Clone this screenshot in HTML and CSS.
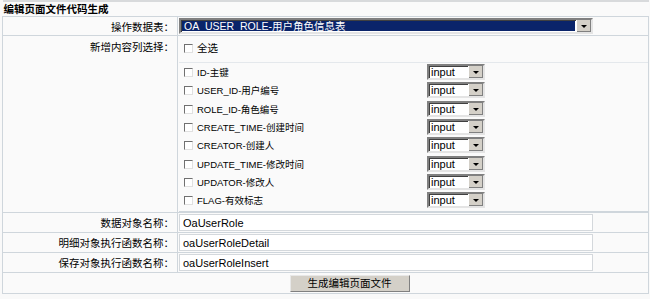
FILE: index.html
```html
<!DOCTYPE html>
<html lang="zh-CN">
<head>
    <meta charset="UTF-8">
    <title>编辑页面文件代码生成</title>
    <link rel="stylesheet" href="styles.css">
</head>
<body>
    <table class="form">
        <tr class="row-title">
            <td class="title" colspan="2">编辑页面文件代码生成</td>
        </tr>
        <tr class="row-main">
            <td class="label">操作数据表：</td>
            <td class="field">
                <div class="select big">
                    <span class="value picked">OA_USER_ROLE-用户角色信息表</span>
                    <span class="arrow"></span>
                </div>
            </td>
        </tr>
        <tr class="row-cols">
            <td class="label top">新增内容列选择：</td>
            <td class="field cols">
                <div class="all"><span class="check"></span>全选</div>
                <div class="list">
                    <div class="item">
                        <span class="name"><span class="check"></span>ID-主键</span>
                        <div class="select small"><span class="value">input</span><span class="arrow"></span></div>
                    </div>
                    <div class="item">
                        <span class="name"><span class="check"></span>USER_ID-用户编号</span>
                        <div class="select small"><span class="value">input</span><span class="arrow"></span></div>
                    </div>
                    <div class="item">
                        <span class="name"><span class="check"></span>ROLE_ID-角色编号</span>
                        <div class="select small"><span class="value">input</span><span class="arrow"></span></div>
                    </div>
                    <div class="item">
                        <span class="name"><span class="check"></span>CREATE_TIME-创建时间</span>
                        <div class="select small"><span class="value">input</span><span class="arrow"></span></div>
                    </div>
                    <div class="item">
                        <span class="name"><span class="check"></span>CREATOR-创建人</span>
                        <div class="select small"><span class="value">input</span><span class="arrow"></span></div>
                    </div>
                    <div class="item">
                        <span class="name"><span class="check"></span>UPDATE_TIME-修改时间</span>
                        <div class="select small"><span class="value">input</span><span class="arrow"></span></div>
                    </div>
                    <div class="item">
                        <span class="name"><span class="check"></span>UPDATOR-修改人</span>
                        <div class="select small"><span class="value">input</span><span class="arrow"></span></div>
                    </div>
                    <div class="item">
                        <span class="name"><span class="check"></span>FLAG-有效标志</span>
                        <div class="select small"><span class="value">input</span><span class="arrow"></span></div>
                    </div>
                </div>
            </td>
        </tr>
        <tr class="row-input">
            <td class="label">数据对象名称：</td>
            <td class="field"><div class="text">OaUserRole</div></td>
        </tr>
        <tr class="row-input">
            <td class="label">明细对象执行函数名称：</td>
            <td class="field"><div class="text">oaUserRoleDetail</div></td>
        </tr>
        <tr class="row-input">
            <td class="label">保存对象执行函数名称：</td>
            <td class="field"><div class="text">oaUserRoleInsert</div></td>
        </tr>
        <tr class="row-button">
            <td class="actions" colspan="2"><span class="button">生成编辑页面文件</span></td>
        </tr>
    </table>
</body>
</html>
```

FILE: styles.css
```css
body {
    margin: 0;
    background-color: #f9f9f9;
    font-family: "Liberation Sans", "Noto Sans CJK SC", sans-serif;
    font-size: 10.5px;
    color: #000;
}
.form {
    width: 647px;
    margin-left: 2px;
    border-collapse: collapse;
    border-top: 2px solid #d8dadc;
}
.form td {
    padding: 0;
    border: 1px solid #cfd6dc;
    background-color: #fafafa;
}
.row-title td {
    height: 14px;
    border-left: none;
    border-right: none;
}
.title {
    font-weight: bold;
    padding-left: 1px !important;
    line-height: 14px;
}
.row-main td {
    height: 18px;
}
.row-input td {
    height: 19px;
}
.row-button td {
    height: 20px;
}
.label {
    width: 171px;
    text-align: right;
    padding-right: 3px !important;
    white-space: nowrap;
    background-color: #f8f8f8;
}
.label.top {
    vertical-align: top;
    padding-top: 3px !important;
}
.field {
    padding-left: 1px !important;
}

/* 下拉框 */
.select {
    display: flex;
    box-sizing: border-box;
    height: 16px;
    border: 2px solid;
    border-color: #808080 #e4e4e4 #e4e4e4 #808080;
    background-color: #fff;
    box-shadow: inset 1px 1px 0 #404040;
}
.select .value {
    flex: 1;
    padding-left: 2px;
    line-height: 12px;
    overflow: hidden;
    white-space: nowrap;
}
.select .picked {
    background-color: #0a246a;
    color: #fff;
    margin: 1px;
    line-height: 10px;
    padding-top: 0;
}
.select .arrow {
    position: relative;
    width: 14px;
    background-color: #d4d0c8;
    border-left: 1px solid #fff;
    box-shadow: inset -1px -1px 0 #808080;
}
.select .arrow::after {
    content: "";
    position: absolute;
    left: 4px;
    top: 5px;
    border-left: 3px solid transparent;
    border-right: 3px solid transparent;
    border-top: 3px solid #000;
}
.select.big {
    width: 414px;
}
.select.small {
    width: 58px;
    font-size: 11px;
}

/* 复选框 */
.check {
    display: inline-block;
    box-sizing: border-box;
    width: 9px;
    height: 9px;
    margin-right: 4px;
    border: 1px solid;
    border-color: #707070 #e0e0e0 #e0e0e0 #707070;
    background-color: #fff;
    vertical-align: -1px;
}
.cols {
    vertical-align: top;
}
.all {
    padding: 4px 0 0 5px;
    height: 22px;
    box-sizing: border-box;
    font-size: 10.5px;
}
.list {
    margin-top: 4px;
    padding-bottom: 2px;
    border-top: 1px solid #e4e8ec;
    border-bottom: 1px solid #cfd6dc;
}
.item {
    display: flex;
    align-items: center;
    height: 18.3px;
    padding-left: 5px;
    font-size: 9.5px;
}
.item .name {
    width: 243px;
    white-space: nowrap;
}

/* 文本框 */
.text {
    box-sizing: border-box;
    width: 414px;
    height: 17px;
    padding: 2px 0 0 3px;
    border: 1px solid #d4d8dc;
    background-color: #fff;
    font-size: 11px;
}
.actions {
    text-align: center;
}
.button {
    display: inline-block;
    box-sizing: border-box;
    width: 120px;
    height: 17px;
    margin-left: 48px;
    line-height: 15px;
    border: 1px solid;
    border-color: #e8e8e8 #808080 #808080 #e8e8e8;
    background-color: #d4d0c8;
}
```
